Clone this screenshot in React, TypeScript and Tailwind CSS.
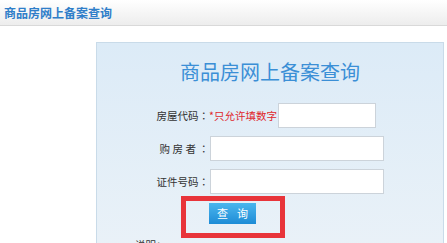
import React from "react";

export default function App() {
  const font = { fontFamily: '"Noto Sans CJK SC", "Noto Sans", sans-serif' };
  const Colon = () => (
    <span style={{ fontFamily: '"Noto Sans CJK TC", "Noto Sans CJK SC", sans-serif' }}>：</span>
  );
  return (
    <div className="w-[447px] h-[243px] overflow-hidden bg-white" style={font}>
      <div className="h-[26px] bg-gradient-to-b from-white to-[#ededed] border-b border-[#d9d9d9] flex items-center px-[4px]">
        <span className="text-[12px] leading-[14px] font-bold text-[#2f7ec9]">商品房网上备案查询</span>
      </div>
      <div className="ml-[96px] mt-[16px] w-[348px] h-[260px] border border-[#c9dbe9] bg-gradient-to-b from-[#dcebf7] to-[#edf3f8]">
        <div className="pt-[17px] text-center text-[20px] leading-[24px] text-[#3b8fd6]">商品房网上备案查询</div>
        <div className="mt-[19px] grid grid-cols-[112px_1fr] gap-y-[8px] text-[10.5px] text-[#333]">
          <div className="h-[25px] flex items-center justify-end">
            房屋代码<Colon />
          </div>
          <div className="h-[25px] flex items-center">
            <span className="text-[#e0262b] w-[69px]">*只允许填数字</span>
            <div className="w-[98px] h-[25px] bg-white border border-[#ccd3da]" />
          </div>
          <div className="h-[25px] flex items-center justify-end">
            <span className="tracking-[2.5px]">购房者</span>
            <Colon />
          </div>
          <div className="h-[25px] flex items-center">
            <div className="ml-[1px] w-[174px] h-[25px] bg-white border border-[#ccd3da]" />
          </div>
          <div className="h-[25px] flex items-center justify-end">
            证件号码<Colon />
          </div>
          <div className="h-[25px] flex items-center">
            <div className="ml-[1px] w-[174px] h-[25px] bg-white border border-[#ccd3da]" />
          </div>
          <div />
          <div className="mt-[1px] relative h-[21px]">
            <button className="w-[47px] h-[21px] bg-gradient-to-b from-[#4ab6ee] to-[#1d8cd6] text-white text-[11px] flex items-center justify-center gap-[9px]">
              <span>查</span>
              <span>询</span>
            </button>
            <div className="absolute left-[-28px] top-[-7px] w-[104px] h-[42px] border-[5px] border-[#e8343a]" />
          </div>
        </div>
        <div className="mt-[13px] ml-[38px] text-[10.5px] text-[#333]">说明：</div>
      </div>
    </div>
  );
}
